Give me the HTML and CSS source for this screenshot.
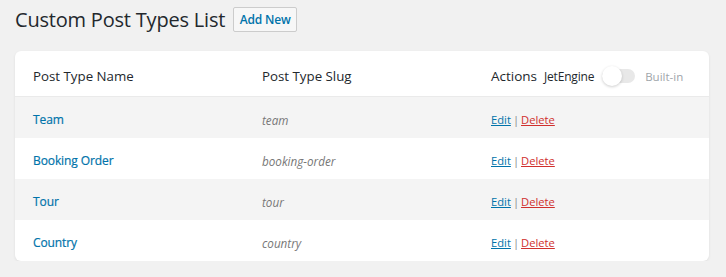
FILE: index.html
```html
<!DOCTYPE html>
<html>
<head>
<meta charset="utf-8">
<link rel="stylesheet" href="styles.css">
</head>
<body>
<div class="wrap">
  <div class="head">
    <h1 class="title">Custom Post Types List</h1>
    <a class="btn">Add New</a>
  </div>
  <div class="card">
    <div class="row thead">
      <div class="cell">Post Type Name</div>
      <div class="cell">Post Type Slug</div>
      <div class="cell actions-h">
        <span class="actions-label">Actions</span>
        <span class="je">JetEngine</span>
        <span class="toggle"><span class="knob"></span></span>
        <span class="builtin">Built-in</span>
      </div>
    </div>
    <div class="row alt">
      <div class="cell"><a class="name">Team</a></div>
      <div class="cell slug">team</div>
      <div class="cell acts"><a class="edit">Edit</a><span class="sep">|</span><a class="del">Delete</a></div>
    </div>
    <div class="row">
      <div class="cell"><a class="name">Booking Order</a></div>
      <div class="cell slug">booking-order</div>
      <div class="cell acts"><a class="edit">Edit</a><span class="sep">|</span><a class="del">Delete</a></div>
    </div>
    <div class="row alt">
      <div class="cell"><a class="name">Tour</a></div>
      <div class="cell slug">tour</div>
      <div class="cell acts"><a class="edit">Edit</a><span class="sep">|</span><a class="del">Delete</a></div>
    </div>
    <div class="row last">
      <div class="cell"><a class="name">Country</a></div>
      <div class="cell slug">country</div>
      <div class="cell acts"><a class="edit">Edit</a><span class="sep">|</span><a class="del">Delete</a></div>
    </div>
  </div>
</div>
</body>
</html>
```
FILE: styles.css
```css
html, body {
  margin: 0;
  padding: 0;
  background: #f1f1f1;
}
body {
  font-family: "Open Sans", "Noto Sans", sans-serif;
  color: #23282d;
}
.wrap {
  padding: 7px 17px 0 15px;
}
.head {
  display: flex;
  align-items: center;
  gap: 8px;
  height: 25px;
}
.title {
  margin: 0;
  font-size: 20px;
  font-weight: 400;
  letter-spacing: -0.2px;
  color: #23282d;
  line-height: 25px;
}
.btn {
  display: inline-flex;
  align-items: center;
  justify-content: center;
  box-sizing: border-box;
  width: 64px;
  height: 25px;
  border: 1px solid #ccc;
  border-radius: 2px;
  background: #f7f7f7;
  color: #0073aa;
  font-size: 12px;
  font-weight: 600;
  letter-spacing: -0.2px;
}
.card {
  margin-top: 19px;
  background: #fff;
  border-radius: 6px;
  box-shadow: 0 1px 3px rgba(0,0,0,0.08);
  overflow: hidden;
}
.row {
  display: grid;
  grid-template-columns: 229px 229px 1fr;
  height: 41px;
  align-items: center;
}
.row.alt {
  background: #f4f4f4;
}
.thead {
  border-bottom: 1px solid #eaeaea;
  padding-top: 5px;
  box-sizing: content-box;
  height: 40px;
}
.cell {
  padding-left: 18px;
  padding-top: 4px;
  font-size: 12px;
  white-space: nowrap;
}
.thead .cell {
  font-size: 13.3px;
  padding-top: 0;
  color: #23282d;
}
.actions-h {
  display: flex;
  align-items: center;
}
.actions-label {
  font-size: 13.5px;
}
.je {
  margin-left: 7px;
  font-size: 12px;
  font-weight: 500;
  letter-spacing: -0.2px;
}
.toggle {
  position: relative;
  margin-left: 8px;
  width: 33px;
  height: 14px;
  border-radius: 7px;
  background: #e8e8e8;
}
.knob {
  position: absolute;
  left: 0;
  top: -3px;
  width: 20px;
  height: 20px;
  border-radius: 50%;
  background: #fff;
  box-shadow: 0 1px 3px rgba(0,0,0,0.2);
}
.builtin {
  margin-left: 10px;
  font-size: 11.5px;
  font-weight: 500;
  color: #a0a5aa;
}
.name {
  color: #0073aa;
  font-weight: 500;
  font-size: 12px;
  letter-spacing: -0.1px;
  -webkit-text-stroke: 0.2px #0073aa;
}
.slug {
  font-style: italic;
  color: #777;
  font-size: 11.7px;
}
.acts {
  font-size: 11.2px;
}
.edit, .del {
  text-decoration: underline;
}
.edit { color: #0073aa; }
.del { color: #d0302d; }
.sep { color: #888; margin: 0 2px; }
```
